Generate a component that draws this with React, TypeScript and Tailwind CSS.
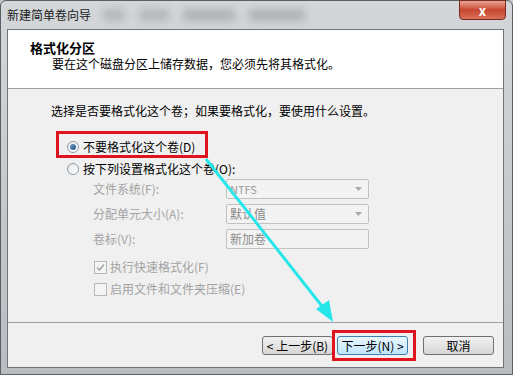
// New Simple Volume wizard — "format partition" step, with annotation
// overlays (red highlight boxes and a cyan arrow) as in the screenshot.

const font = { fontFamily: '"Noto Sans CJK SC", "Liberation Sans", sans-serif' };

function Radio({ checked }: { checked?: boolean }) {
  return (
    <span className="flex h-[12px] w-[12px] items-center justify-center rounded-full border border-[#8e9aa6] bg-gradient-to-br from-[#e6e9ec] to-[#ffffff]">
      {checked && (
        <span className="h-[6px] w-[6px] rounded-full bg-gradient-to-br from-[#6fa0c9] to-[#1d4f80]" />
      )}
    </span>
  );
}

function Check({ checked }: { checked?: boolean }) {
  return (
    <span className="flex h-[13px] w-[13px] items-center justify-center border border-[#b8b8b8] bg-[#f4f4f4]">
      {checked && (
        <svg width="9" height="9" viewBox="0 0 9 9">
          <path d="M1 4.5 L3.5 7 L8 1.5" fill="none" stroke="#a8a8a8" strokeWidth="1.6" />
        </svg>
      )}
    </span>
  );
}

function Field({ label, value, select }: { label: string; value: string; select?: boolean }) {
  return (
    <div className="flex h-[20px] items-center">
      <span className="w-[133px] text-[12px] text-[#a3a3a3]">{label}</span>
      <div className="flex h-[20px] w-[143px] items-center justify-between rounded-[2px] border border-[#c2c2c2] bg-[#f3f3f3] pl-[3px] pr-[6px]">
        <span className={value === "NTFS" ? "text-[11px] text-[#9a9a9a]" : "text-[12px] text-[#8a8a8a]"}>
          {value}
        </span>
        {select && (
          <svg width="7" height="4" viewBox="0 0 7 4">
            <path d="M0 0 H7 L3.5 4 Z" fill="#a8a8a8" />
          </svg>
        )}
      </div>
    </div>
  );
}

function Button({ children, focused }: { children: React.ReactNode; focused?: boolean }) {
  return (
    <div
      className={`flex h-[19px] w-[71px] items-center justify-center rounded-[3px] border text-[12px] text-black ${
        focused
          ? "border-[#3c7fb1] bg-gradient-to-b from-[#eaf6fd] to-[#bee6fd]"
          : "border-[#707070] bg-gradient-to-b from-[#f2f2f2] to-[#d5d5d5]"
      }`}
    >
      {children}
    </div>
  );
}

export default function App() {
  return (
    <div style={font} className="relative h-[375px] w-[513px] overflow-hidden bg-[#c4c8cc] leading-none">
      <div className="flex h-full flex-col rounded-t-[6px] border border-[#5a5f66] bg-gradient-to-b from-[#d3d7da] via-[#c6cacd] to-[#b9bdc1]">
        {/* title bar */}
        <div className="relative flex h-[28px] shrink-0 items-center pl-[6px]">
          <span className="text-[12px] text-[#1a1a1a]">新建简单卷向导</span>
          <div className="ml-[12px] flex gap-[14px] opacity-30 blur-[4px]">
            <span className="h-[12px] w-[22px] bg-[#6b6f73]" />
            <span className="h-[12px] w-[30px] bg-[#6b6f73]" />
            <span className="h-[12px] w-[52px] bg-[#5a5e62]" />
            <span className="h-[12px] w-[56px] bg-[#5a5e62]" />
          </div>
          <div className="absolute right-[6px] top-[-1px] flex h-[20px] w-[47px] items-center justify-center rounded-b-[4px] border border-[#7a2a20] bg-gradient-to-b from-[#e8a493] via-[#c7462f] to-[#d9705a]">
            <span className="text-[13px] font-bold text-white">x</span>
          </div>
        </div>

        {/* client area */}
        <div className="mb-[6px] ml-[6px] mr-[8px] flex flex-1 flex-col border border-[#6f747a] bg-[#f0f0f0]">
          <div className="h-[59px] shrink-0 border-b border-[#a0a0a0] bg-white pl-[22px] pt-[10px]">
            <div className="text-[13px] font-bold leading-[16px] text-black">格式化分区</div>
            <div className="pl-[22px] text-[12px] leading-[16px] text-black">
              要在这个磁盘分区上储存数据，您必须先将其格式化。
            </div>
          </div>

          <div className="flex-1 pl-[43px] pt-[14px]">
            <div className="text-[12px] leading-[16px] text-black">
              选择是否要格式化这个卷；如果要格式化，要使用什么设置。
            </div>

            <div className="relative mt-[20px] flex h-[16px] items-center gap-[4px] pl-[16px]">
              <Radio checked />
              <span className="text-[12px] text-black">不要格式化这个卷(D)</span>
              <div className="absolute left-[5px] top-[-8px] h-[27px] w-[152px] border-[3px] border-[#e0141e]" />
            </div>
            <div className="mt-[6px] flex h-[16px] items-center gap-[4px] pl-[16px]">
              <Radio />
              <span className="text-[12px] text-black">按下列设置格式化这个卷(O):</span>
            </div>

            <div className="mt-[2px] flex flex-col gap-[5px] pl-[42px]">
              <Field label="文件系统(F):" value="NTFS" select />
              <Field label="分配单元大小(A):" value="默认值" select />
              <Field label="卷标(V):" value="新加卷" />
            </div>

            <div className="mt-[11px] flex flex-col gap-[8px] pl-[43px]">
              <div className="flex h-[14px] items-center gap-[3px]">
                <Check checked />
                <span className="text-[12px] text-[#a3a3a3]">执行快速格式化(F)</span>
              </div>
              <div className="flex h-[14px] items-center gap-[3px]">
                <Check />
                <span className="text-[12px] text-[#a3a3a3]">启用文件和文件夹压缩(E)</span>
              </div>
            </div>
          </div>

          <div className="h-[45px] shrink-0 border-t border-[#a0a0a0]">
            <div className="flex justify-end pr-[9px] pt-[13px]">
              <Button>&lt; 上一步(B)</Button>
              <div className="relative ml-[4px]">
                <Button focused>下一步(N) &gt;</Button>
                <div className="absolute left-[-5px] top-[-6px] h-[31px] w-[84px] border-[3px] border-[#e0141e]" />
              </div>
              <div className="ml-[15px]">
                <Button>取消</Button>
              </div>
            </div>
          </div>
        </div>
      </div>

      {/* annotation arrow */}
      <svg className="pointer-events-none absolute left-0 top-0" width="513" height="375">
        <line x1="206" y1="159" x2="325" y2="310" stroke="#26e6ea" strokeWidth="3" />
        <polygon points="333,322 316,309 329,300" fill="#26e6ea" />
      </svg>
    </div>
  );
}
